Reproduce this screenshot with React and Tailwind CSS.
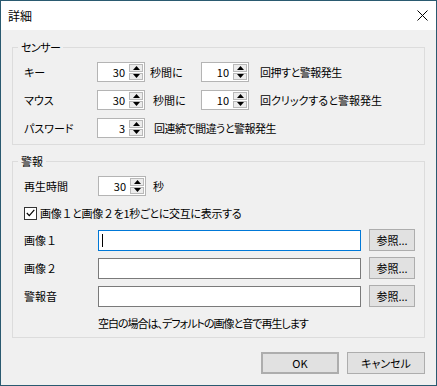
import React from 'react';

const Arrow = ({ up }) => (
  <svg width="7" height="4" viewBox="0 0 7 4">
    <path d={up ? 'M0 4 L3.5 0 L7 4 Z' : 'M0 0 L3.5 4 L7 0 Z'} fill="#000" />
  </svg>
);

const Spin = ({ value }) => (
  <div className="flex h-[20px] w-[48px] border border-[#b4b4b4] bg-white">
    <div className="flex flex-1 items-center justify-end pr-[3px] text-[11px] leading-none">{value}</div>
    <div className="flex w-[16px] flex-col gap-[1px] p-[1px]">
      <div className="flex flex-1 items-center justify-center border border-[#b9b9b9] bg-[#ececec]">
        <Arrow up />
      </div>
      <div className="flex flex-1 items-center justify-center border border-[#b9b9b9] bg-[#ececec]">
        <Arrow />
      </div>
    </div>
  </div>
);

const Button = ({ children, className = '' }) => (
  <button className={`flex items-center justify-center border border-[#adadad] bg-[#e1e1e1] text-[11px] leading-none ${className}`}>
    {children}
  </button>
);

// full-width digits keep their full cell, as in the original dialog
const Wide = ({ children }) => <span className="[font-feature-settings:normal]">{children}</span>;

const FileRow = ({ label, focused }) => (
  <div className="flex h-[22px] items-center">
    <div className="w-[74px]">{label}</div>
    <div className={`flex h-[21px] w-[263px] items-center bg-white border ${focused ? 'border-[#0078d7]' : 'border-[#7a7a7a]'}`}>
      {focused && <span className="ml-[3px] h-[13px] w-[1px] bg-black" />}
    </div>
    <Button className="ml-[8px] h-[22px] w-[46px]">参照...</Button>
  </div>
);

export default function App() {
  return (
    <div className="flex h-[386px] w-[437px] flex-col border border-[#2a5a70] bg-[#f0f0f0] font-['Noto_Sans_CJK_JP',sans-serif] text-[11px] leading-none text-black [font-feature-settings:'palt']">
      <div className="flex h-[29px] shrink-0 items-center justify-between bg-white pl-[7px] pr-[8px]">
        <span className="text-[12px]">詳細</span>
        <svg width="11" height="11" viewBox="0 0 11 11">
          <path d="M0.5 0.5 L10.5 10.5 M10.5 0.5 L0.5 10.5" stroke="#000" strokeWidth="1" />
        </svg>
      </div>

      <div className="flex flex-col px-[11px] pt-[9px]">
        <fieldset className="m-0 border border-[#dcdcdc] p-0">
          <legend className="ml-[5px] px-[3px] leading-[16px] tracking-[-0.5px]">センサー</legend>
          <div className="flex flex-col gap-[8px] pb-[6px] pl-[11px] pt-[7px]">
            <div className="flex h-[20px] items-center">
              <div className="w-[73px]">キー</div>
              <Spin value="30" />
              <div className="w-[56px] pl-[5px]">秒間に</div>
              <Spin value="10" />
              <div className="pl-[11px] tracking-[-0.5px]">回押すと警報発生</div>
            </div>
            <div className="flex h-[20px] items-center">
              <div className="w-[73px]">マウス</div>
              <Spin value="30" />
              <div className="w-[56px] pl-[8px]">秒間に</div>
              <Spin value="10" />
              <div className="pl-[11px]">回クリックすると警報発生</div>
            </div>
            <div className="flex h-[20px] items-center">
              <div className="w-[73px]">パスワード</div>
              <Spin value="3" />
              <div className="pl-[9px] tracking-[-0.5px]">回連続で間違うと警報発生</div>
            </div>
          </div>
        </fieldset>

        <fieldset className="m-0 mt-[8px] border border-[#dcdcdc] p-0">
          <legend className="ml-[5px] px-[3px] leading-[16px]">警報</legend>
          <div className="flex flex-col pb-[5px] pl-[11px] pt-[7px]">
            <div className="flex h-[20px] items-center">
              <div className="w-[74px]">再生時間</div>
              <Spin value="30" />
              <div className="pl-[7px]">秒</div>
            </div>
            <div className="mt-[7px] flex h-[20px] items-center">
              <div className="flex h-[13px] w-[13px] items-center justify-center border border-[#333] bg-white">
                <svg width="9" height="8" viewBox="0 0 9 8">
                  <path d="M0.8 4 L3.3 6.6 L8.3 0.8" fill="none" stroke="#000" strokeWidth="1.2" />
                </svg>
              </div>
              <div className="pl-[3px] tracking-[-0.3px]">
                画像<Wide>１</Wide>と画像<Wide>２</Wide>を1秒ごとに交互に表示する
              </div>
            </div>
            <div className="mt-[6px] flex flex-col gap-[6px]">
              <FileRow label={<>画像<Wide>１</Wide></>} focused />
              <FileRow label={<>画像<Wide>２</Wide></>} />
              <FileRow label="警報音" />
            </div>
            <div className="mt-[7px] flex h-[18px] items-center pl-[74px] tracking-[-1px]">
              空白の場合は、デフォルトの画像と音で再生します
            </div>
          </div>
        </fieldset>

        <div className="mt-[14px] flex justify-end gap-[8px]">
          <Button className="h-[22px] w-[78px] border-2 border-[#0078d7]">OK</Button>
          <Button className="h-[22px] w-[78px]">キャンセル</Button>
        </div>
      </div>
    </div>
  );
}
